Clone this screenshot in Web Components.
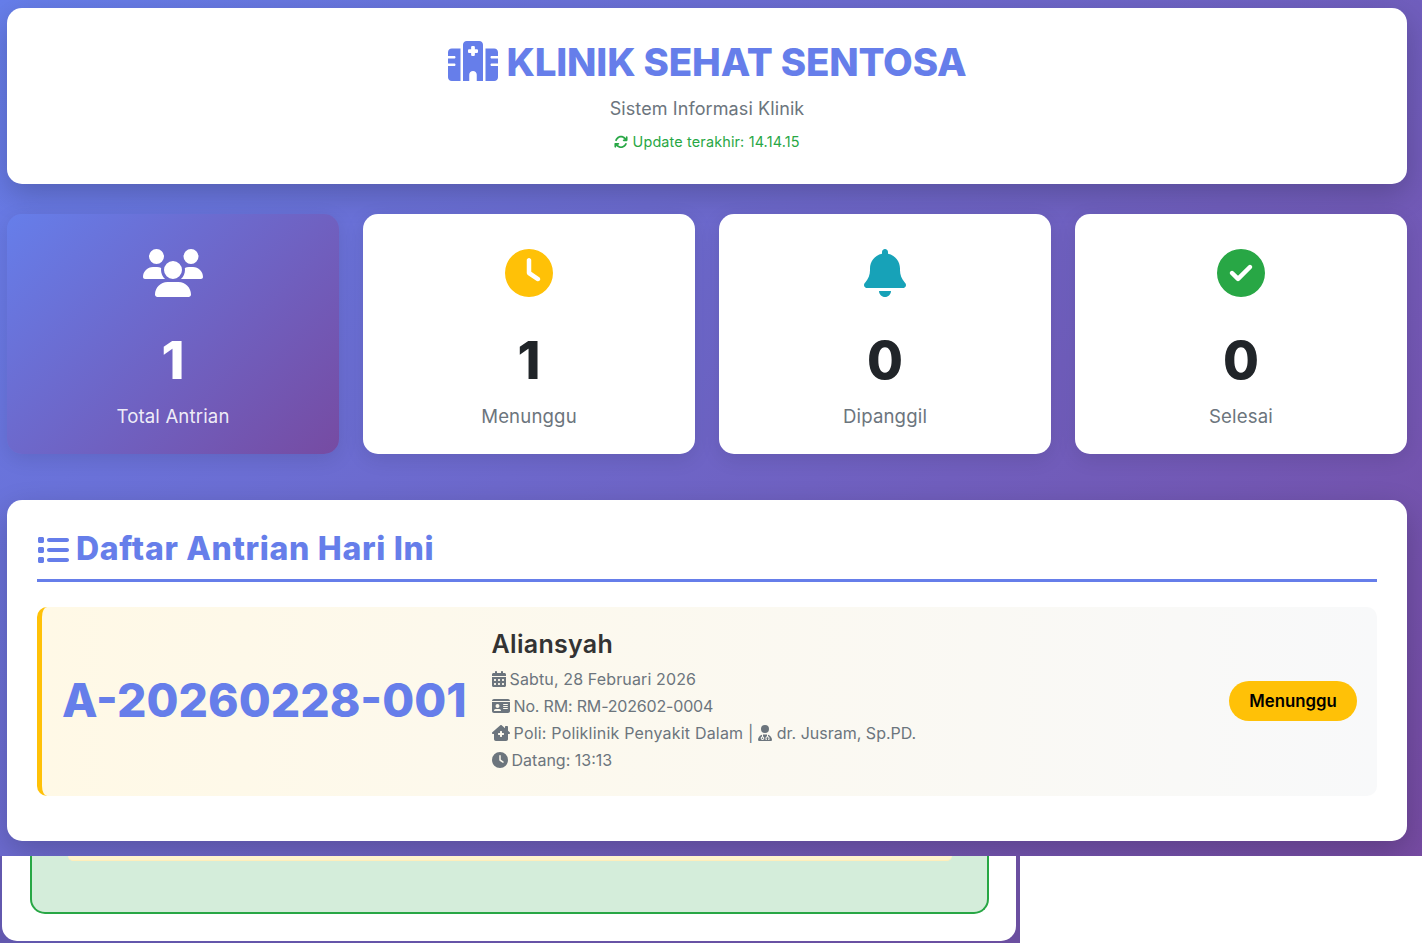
<!DOCTYPE html>
<html lang="id">
<head>
<meta charset="utf-8">
<title>Klinik Sehat Sentosa</title>
<style>
  html, body { margin: 0; background: #fff; }
  body { font-family: Inter, "Liberation Sans", sans-serif; height: 944px; overflow: hidden; }
</style>
</head>
<body>
<app-shell>
  <clinic-header title="KLINIK SEHAT SENTOSA" subtitle="Sistem Informasi Klinik" updated="Update terakhir: 14.14.15"></clinic-header>
  <stat-row>
    <stat-card icon="users" value="1" label="Total Antrian" variant="primary"></stat-card>
    <stat-card icon="clock" value="1" label="Menunggu" color="#ffc107"></stat-card>
    <stat-card icon="bell" value="0" label="Dipanggil" color="#17a2b8"></stat-card>
    <stat-card icon="check" value="0" label="Selesai" color="#28a745"></stat-card>
  </stat-row>
  <queue-section heading="Daftar Antrian Hari Ini">
    <queue-item number="A-20260228-001" name="Aliansyah" status="Menunggu">
      <info-line icon="calendar" style="letter-spacing:.13px">Sabtu, 28 Februari 2026</info-line>
      <info-line icon="idcard" style="letter-spacing:-.18px">No. RM: RM-202602-0004</info-line>
      <info-line icon="clinic"><span style="letter-spacing:.2px">Poli: Poliklinik Penyakit Dalam | </span><fa-icon name="doctor" size="16"></fa-icon> dr. Jusram, Sp.PD.</info-line>
      <info-line icon="clock">Datang: 13:13</info-line>
    </queue-item>
  </queue-section>
</app-shell>
<under-layer></under-layer>

<script>
const ICONS = {
  hospital: ['0 0 640 512', 'M192 48c0-26.5 21.5-48 48-48H400c26.5 0 48 21.5 48 48V512H368V432c0-26.5-21.5-48-48-48s-48 21.5-48 48v80H192V48zM48 96H160V512H48c-26.5 0-48-21.5-48-48V320H80c8.8 0 16-7.2 16-16s-7.2-16-16-16H0V224H80c8.8 0 16-7.2 16-16s-7.2-16-16-16H0V144c0-26.5 21.5-48 48-48zm544 0c26.5 0 48 21.5 48 48v48H560c-8.8 0-16 7.2-16 16s7.2 16 16 16h80v64H560c-8.8 0-16 7.2-16 16s7.2 16 16 16h80V464c0 26.5-21.5 48-48 48H480V96H592zM312 64c-8.8 0-16 7.2-16 16v24H272c-8.8 0-16 7.2-16 16v16c0 8.8 7.2 16 16 16h24v24c0 8.8 7.2 16 16 16h16c8.8 0 16-7.2 16-16V152h24c8.8 0 16-7.2 16-16V120c0-8.8-7.2-16-16-16H344V80c0-8.8-7.2-16-16-16H312z'],
  sync: ['0 0 512 512', 'M105.1 202.6c7.7-21.8 20.2-42.3 37.8-59.8c62.5-62.5 163.8-62.5 226.3 0L386.3 160H352c-17.7 0-32 14.3-32 32s14.3 32 32 32H463.5c0 0 0 0 0 0h.4c17.7 0 32-14.3 32-32V80c0-17.7-14.3-32-32-32s-32 14.3-32 32v35.2L414.4 97.6c-87.5-87.5-229.3-87.5-316.8 0C73.2 122 55.6 150.7 44.8 181.4c-5.9 16.7 2.9 34.9 19.5 40.8s34.9-2.9 40.8-19.5zM39 289.3c-5 1.5-9.8 4.2-13.7 8.2c-4 4-6.7 8.8-8.1 14c-.3 1.2-.6 2.5-.8 3.8c-.3 1.7-.4 3.4-.4 5.1V432c0 17.7 14.3 32 32 32s32-14.3 32-32V396.9l17.6 17.5 0 0c87.5 87.4 229.3 87.4 316.7 0c24.4-24.4 42.1-53.1 52.9-83.7c5.9-16.7-2.9-34.9-19.5-40.8s-34.9 2.9-40.8 19.5c-7.7 21.8-20.2 42.3-37.8 59.8c-62.5 62.5-163.8 62.5-226.3 0l-.1-.1L125.6 352H160c17.7 0 32-14.3 32-32s-14.3-32-32-32H48.4c-1.6 0-3.2 .1-4.8 .3s-3.1 .5-4.6 1z'],
  users: ['0 0 640 512', 'M144 0a80 80 0 1 1 0 160A80 80 0 1 1 144 0zM512 0a80 80 0 1 1 0 160A80 80 0 1 1 512 0zM0 298.7C0 239.8 47.8 192 106.7 192h42.7c15.9 0 31 3.5 44.6 9.7c-1.3 7.2-1.9 14.7-1.9 22.3c0 38.2 16.8 72.5 43.3 96c-.2 0-.4 0-.7 0H21.3C9.6 320 0 310.4 0 298.7zM405.3 320c-.2 0-.4 0-.7 0c26.6-23.5 43.3-57.8 43.3-96c0-7.6-.7-15-1.9-22.3c13.6-6.3 28.7-9.7 44.6-9.7h42.7C592.2 192 640 239.8 640 298.7c0 11.8-9.6 21.3-21.3 21.3H405.3zM224 224a96 96 0 1 1 192 0 96 96 0 1 1 -192 0zM128 485.3C128 411.7 187.7 352 261.3 352H378.7C452.3 352 512 411.7 512 485.3c0 14.7-11.9 26.7-26.7 26.7H154.7c-14.7 0-26.7-11.9-26.7-26.7z'],
  clock: ['0 0 512 512', 'M256 0a256 256 0 1 1 0 512A256 256 0 1 1 256 0zM232 120V256c0 8 4 15.5 10.7 20l96 64c11 7.4 25.9 4.4 33.3-6.7s4.4-25.9-6.7-33.3L280 243.2V120c0-13.3-10.7-24-24-24s-24 10.7-24 24z'],
  bell: ['0 0 448 512', 'M224 0c-17.7 0-32 14.3-32 32V51.2C119 66 64 130.6 64 208v18.8c0 47-17.3 92.4-48.5 127.6l-7.4 8.3c-8.4 9.4-10.4 22.9-5.3 34.4S19.4 416 32 416H416c12.6 0 24-7.4 29.2-18.9s3.1-25-5.3-34.4l-7.4-8.3C401.3 319.2 384 273.9 384 226.8V208c0-77.4-55-142-128-156.8V32c0-17.7-14.3-32-32-32zm45.3 493.3c12-12 18.7-28.3 18.7-45.3H224 160c0 17 6.7 33.3 18.7 45.3s28.3 18.7 45.3 18.7s33.3-6.7 45.3-18.7z'],
  check: ['0 0 512 512', 'M256 512A256 256 0 1 0 256 0a256 256 0 1 0 0 512zM369 209L241 337c-9.4 9.4-24.6 9.4-33.9 0l-64-64c-9.4-9.4-9.4-24.6 0-33.9s24.6-9.4 33.9 0l47 47L335 175c9.4-9.4 24.6-9.4 33.9 0s9.4 24.6 0 33.9z'],
  list: ['0 0 512 512', 'M40 48C26.7 48 16 58.7 16 72v48c0 13.3 10.7 24 24 24H88c13.3 0 24-10.7 24-24V72c0-13.3-10.7-24-24-24H40zM192 64c-17.7 0-32 14.3-32 32s14.3 32 32 32H480c17.7 0 32-14.3 32-32s-14.3-32-32-32H192zm0 160c-17.7 0-32 14.3-32 32s14.3 32 32 32H480c17.7 0 32-14.3 32-32s-14.3-32-32-32H192zm0 160c-17.7 0-32 14.3-32 32s14.3 32 32 32H480c17.7 0 32-14.3 32-32s-14.3-32-32-32H192zM16 232v48c0 13.3 10.7 24 24 24H88c13.3 0 24-10.7 24-24V232c0-13.3-10.7-24-24-24H40c-13.3 0-24 10.7-24 24zM40 368c-13.3 0-24 10.7-24 24v48c0 13.3 10.7 24 24 24H88c13.3 0 24-10.7 24-24V392c0-13.3-10.7-24-24-24H40z'],
  calendar: ['0 0 448 512', 'M128 0c17.7 0 32 14.3 32 32V64H288V32c0-17.7 14.3-32 32-32s32 14.3 32 32V64h48c26.5 0 48 21.5 48 48v48H0V112C0 85.5 21.5 64 48 64H96V32c0-17.7 14.3-32 32-32zM0 192H448V464c0 26.5-21.5 48-48 48H48c-26.5 0-48-21.5-48-48V192zm64 80v32c0 8.8 7.2 16 16 16h32c8.8 0 16-7.2 16-16V272c0-8.8-7.2-16-16-16H80c-8.8 0-16 7.2-16 16zm128 0v32c0 8.8 7.2 16 16 16h32c8.8 0 16-7.2 16-16V272c0-8.8-7.2-16-16-16H208c-8.8 0-16 7.2-16 16zm144-16c-8.8 0-16 7.2-16 16v32c0 8.8 7.2 16 16 16h32c8.8 0 16-7.2 16-16V272c0-8.8-7.2-16-16-16H336zM64 400v32c0 8.8 7.2 16 16 16h32c8.8 0 16-7.2 16-16V400c0-8.8-7.2-16-16-16H80c-8.8 0-16 7.2-16 16zm144-16c-8.8 0-16 7.2-16 16v32c0 8.8 7.2 16 16 16h32c8.8 0 16-7.2 16-16V400c0-8.8-7.2-16-16-16H208zm112 16v32c0 8.8 7.2 16 16 16h32c8.8 0 16-7.2 16-16V400c0-8.8-7.2-16-16-16H336c-8.8 0-16 7.2-16 16z'],
  idcard: ['0 0 576 512', 'M0 96l576 0c0-35.3-28.7-64-64-64H64C28.7 32 0 60.7 0 96zm0 32V416c0 35.3 28.7 64 64 64H512c35.3 0 64-28.7 64-64V128H0zM64 405.3c0-29.5 23.9-53.3 53.3-53.3H234.7c29.5 0 53.3 23.9 53.3 53.3c0 5.9-4.8 10.7-10.7 10.7H74.7c-5.9 0-10.7-4.8-10.7-10.7zM176 192a64 64 0 1 1 0 128 64 64 0 1 1 0-128zm176 16c0-8.8 7.2-16 16-16H496c8.8 0 16 7.2 16 16s-7.2 16-16 16H368c-8.8 0-16-7.2-16-16zm0 64c0-8.8 7.2-16 16-16H496c8.8 0 16 7.2 16 16s-7.2 16-16 16H368c-8.8 0-16-7.2-16-16zm0 64c0-8.8 7.2-16 16-16H496c8.8 0 16 7.2 16 16s-7.2 16-16 16H368c-8.8 0-16-7.2-16-16z'],
  clinic: ['0 0 576 512', 'M575.8 255.5c0 18-15 32.1-32 32.1h-32l.7 160.2c.2 35.5-28.5 64.3-64 64.3H128.1c-35.3 0-64-28.7-64-64V287.6H32c-18 0-32-14-32-32.1c0-9 3-17 10-24L266.4 8c7-7 15-8 22-8s15 2 21 7L416 100.7V64c0-17.7 14.3-32 32-32h32c17.7 0 32 14.3 32 32V185l52.8 46.4c8 7 12 15 11 24zM272 192c-8.8 0-16 7.2-16 16v48H208c-8.8 0-16 7.2-16 16v32c0 8.8 7.2 16 16 16h48v48c0 8.8 7.2 16 16 16h32c8.8 0 16-7.2 16-16V320h48c8.8 0 16-7.2 16-16V272c0-8.8-7.2-16-16-16H320V208c0-8.8-7.2-16-16-16H272z'],
  doctor: ['0 0 448 512', 'M224 256A128 128 0 1 0 224 0a128 128 0 1 0 0 256zm-96 55.2C54 332.9 0 401.3 0 482.3C0 498.7 13.3 512 29.7 512H418.3c16.4 0 29.7-13.3 29.7-29.7c0-81-54-149.4-128-171.1V362c27.6 7.1 48 32.2 48 62v40c0 8.8-7.2 16-16 16H336c-8.8 0-16-7.2-16-16s7.2-16 16-16V424c0-17.7-14.3-32-32-32s-32 14.3-32 32v24c8.8 0 16 7.2 16 16s-7.2 16-16 16H256c-8.8 0-16-7.2-16-16V424c0-29.8 20.4-54.9 48-62V304.9c-6-.6-12.1-.9-18.3-.9H178.3c-6.2 0-12.3 .3-18.3 .9v65.4c23.1 6.9 40 28.3 40 53.7c0 30.9-25.1 56-56 56s-56-25.1-56-56c0-25.4 16.9-46.8 40-53.7V311.2zM144 448a24 24 0 1 0 0-48 24 24 0 1 0 0 48z']
};

class FaIcon extends HTMLElement {
  connectedCallback() {
    const [box, d] = ICONS[this.getAttribute('name')];
    const size = this.getAttribute('size') || 16;
    const [, , w, h] = box.split(' ').map(Number);
    this.attachShadow({ mode: 'open' }).innerHTML = `
      <style>
        :host { display: inline-block; line-height: 0; vertical-align: -0.125em; }
        svg { display: block; fill: currentColor; }
      </style>
      <svg viewBox="${box}" width="${size * w / h}" height="${size}"><path d="${d}"/></svg>`;
  }
}
customElements.define('fa-icon', FaIcon);

const shellTemplate = document.createElement('template');
shellTemplate.innerHTML = `
  <style>
    :host {
      display: block;
      box-sizing: border-box;
      height: 856px;
      overflow: hidden;
      padding: 8px 15px 0 7px;
      background: linear-gradient(135deg, #667eea 0%, #764ba2 100%);
    }
  </style>
  <slot></slot>`;
class AppShell extends HTMLElement {
  constructor() {
    super();
    this.attachShadow({ mode: 'open' }).appendChild(shellTemplate.content.cloneNode(true));
  }
}
customElements.define('app-shell', AppShell);

class ClinicHeader extends HTMLElement {
  connectedCallback() {
    this.attachShadow({ mode: 'open' }).innerHTML = `
      <style>
        :host {
          display: block;
          height: 176px;
          box-sizing: border-box;
          padding-top: 20px;
          background: #fff;
          border-radius: 15px;
          box-shadow: 0 10px 30px rgba(0,0,0,.2);
          text-align: center;
        }
        h1 {
          margin: 0;
          display: flex;
          justify-content: center;
          align-items: center;
          gap: 9px;
          height: 68px;
          font-size: 38.5px;
          font-weight: 800;
          letter-spacing: -.2px;
          color: #667eea;
        }
        h1 fa-icon { margin-top: -2px; }
        p { margin: 0; }
        .sub { font-size: 18px; line-height: 30px; color: #6c757d; margin-top: -2px; letter-spacing: .1px; }
        .upd { font-size: 14.4px; line-height: 24px; color: #28a745; margin-top: 6px; letter-spacing: .16px; }
      </style>
      <h1><fa-icon name="hospital" size="40"></fa-icon><span>${this.getAttribute('title')}</span></h1>
      <p class="sub">${this.getAttribute('subtitle')}</p>
      <p class="upd"><fa-icon name="sync" size="14"></fa-icon> ${this.getAttribute('updated')}</p>`;
    this.removeAttribute('title');
  }
}
customElements.define('clinic-header', ClinicHeader);

const rowTemplate = document.createElement('template');
rowTemplate.innerHTML = `
  <style>
    :host {
      display: grid;
      grid-template-columns: repeat(4, 1fr);
      gap: 24px;
      margin-top: 30px;
    }
  </style>
  <slot></slot>`;
class StatRow extends HTMLElement {
  constructor() {
    super();
    this.attachShadow({ mode: 'open' }).appendChild(rowTemplate.content.cloneNode(true));
  }
}
customElements.define('stat-row', StatRow);

class StatCard extends HTMLElement {
  connectedCallback() {
    const primary = this.getAttribute('variant') === 'primary';
    this.attachShadow({ mode: 'open' }).innerHTML = `
      <style>
        :host {
          display: flex;
          flex-direction: column;
          align-items: center;
          box-sizing: border-box;
          height: 240px;
          padding-top: 35px;
          border-radius: 15px;
          box-shadow: 0 5px 20px rgba(0,0,0,.1);
          background: ${primary ? 'linear-gradient(135deg, #667eea 0%, #764ba2 100%)' : '#fff'};
          color: ${primary ? '#fff' : '#212529'};
        }
        .icon { color: ${primary ? '#fff' : this.getAttribute('color')}; height: 48px; }
        .value { font-size: 52px; font-weight: 800; line-height: 68px; margin-top: 30px; }
        .label { font-size: 18.6px; line-height: 30px; margin-top: 6px; letter-spacing: .15px; color: ${primary ? 'rgba(255,255,255,.9)' : '#6c757d'}; }
      </style>
      <div class="icon"><fa-icon name="${this.getAttribute('icon')}" size="48"></fa-icon></div>
      <div class="value">${this.getAttribute('value')}</div>
      <div class="label">${this.getAttribute('label')}</div>`;
  }
}
customElements.define('stat-card', StatCard);

class QueueSection extends HTMLElement {
  connectedCallback() {
    this.attachShadow({ mode: 'open' }).innerHTML = `
      <style>
        :host {
          display: block;
          box-sizing: border-box;
          height: 341px;
          margin-top: 46px;
          padding: 20px 30px 0;
          background: #fff;
          border-radius: 15px;
          box-shadow: 0 10px 30px rgba(0,0,0,.2);
        }
        h2 {
          margin: 0 0 25px;
          height: 59px;
          display: flex;
          align-items: center;
          gap: 7px;
          font-size: 32px;
          font-weight: 800;
          letter-spacing: .7px;
          color: #667eea;
          border-bottom: 3px solid #667eea;
        }
        h2 span { margin-top: -2px; }
      </style>
      <h2><fa-icon name="list" size="32"></fa-icon><span>${this.getAttribute('heading')}</span></h2>
      <slot></slot>`;
  }
}
customElements.define('queue-section', QueueSection);

class QueueItem extends HTMLElement {
  connectedCallback() {
    this.attachShadow({ mode: 'open' }).innerHTML = `
      <style>
        :host {
          display: flex;
          align-items: center;
          gap: 25px;
          box-sizing: border-box;
          height: 189px;
          padding: 20px;
          border-left: 5px solid #ffc107;
          border-radius: 10px;
          background: linear-gradient(90deg, #fff9e6, #f8f9fa);
        }
        .num { font-size: 46.25px; font-weight: 800; color: #667eea; white-space: nowrap; margin-bottom: 3px; }
        .body { flex: 1; margin-bottom: 4px; }
        .name { font-size: 25px; font-weight: 600; line-height: 39px; margin-bottom: 2px; letter-spacing: .3px; color: #333; }
        .badge {
          display: flex; align-items: center; justify-content: center;
          width: 128px; height: 40px;
          margin-bottom: 2px;
          border-radius: 20px;
          background: #ffc107;
          color: #000;
          font-size: 16.8px;
          font-weight: 600;
        }
      </style>
      <div class="num">${this.getAttribute('number')}</div>
      <div class="body">
        <div class="name">${this.getAttribute('name')}</div>
        <slot></slot>
      </div>
      <div class="badge">${this.getAttribute('status')}</div>`;
  }
}
customElements.define('queue-item', QueueItem);

class InfoLine extends HTMLElement {
  connectedCallback() {
    this.attachShadow({ mode: 'open' }).innerHTML = `
      <style>
        :host { display: block; font-size: 16px; line-height: 27.2px; color: #6c757d; white-space: nowrap; }
        fa-icon { margin-right: 4px; }
      </style>
      <fa-icon name="${this.getAttribute('icon')}" size="16"></fa-icon><slot></slot>`;
  }
}
customElements.define('info-line', InfoLine);

class UnderLayer extends HTMLElement {
  connectedCallback() {
    this.attachShadow({ mode: 'open' }).innerHTML = `
      <style>
        :host {
          display: block;
          box-sizing: border-box;
          width: 1020px;
          height: 87px;
          padding: 0 4px 2px 2px;
          background: linear-gradient(90deg, #6258ae, #6b4fa0);
        }
        .card {
          box-sizing: border-box;
          height: 85px;
          padding: 0 27px 0 28px;
          background: #fff;
          border-radius: 0 0 15px 15px;
        }
        .ok {
          box-sizing: border-box;
          height: 58px;
          padding: 0 35px 0 36px;
          background: #d4edda;
          border: 2px solid #28a745;
          border-top: 0;
          border-radius: 0 0 15px 15px;
        }
        .warn {
          height: 5px;
          background: #fff3cd;
          border-bottom: 1px solid #ffeeba;
          box-sizing: border-box;
          border-radius: 0 0 5px 5px;
        }
      </style>
      <div class="card"><div class="ok"><div class="warn"></div></div></div>`;
  }
}
customElements.define('under-layer', UnderLayer);
</script>
</body>
</html>
